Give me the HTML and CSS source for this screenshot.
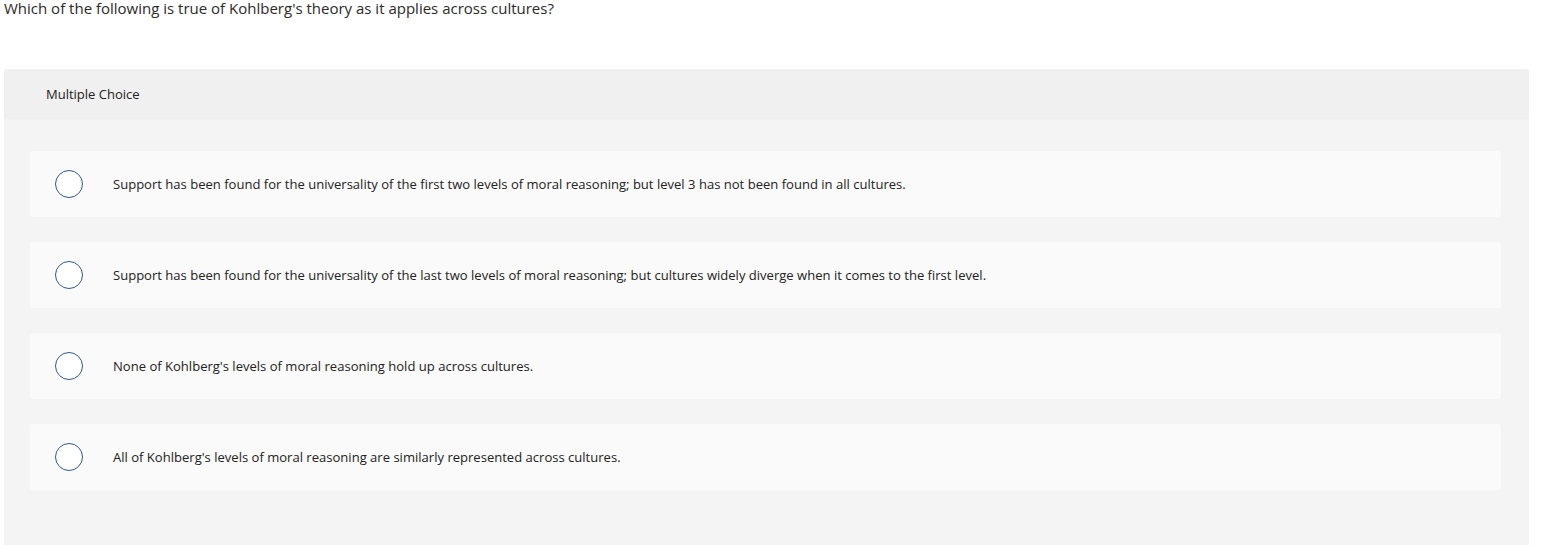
FILE: index.html
```html
<!DOCTYPE html>
<html>
<head>
<meta charset="utf-8">
<link rel="stylesheet" href="styles.css">
</head>
<body>
<p class="question">Which of the following is true of Kohlberg's theory as it applies across cultures?</p>
<section class="panel">
  <header class="panel-head">Multiple Choice</header>
  <div class="options">
    <label class="option"><span class="radio"></span><span class="opt-text">Support has been found for the universality of the first two levels of moral reasoning; but level 3 has not been found in all cultures.</span></label>
    <label class="option"><span class="radio"></span><span class="opt-text">Support has been found for the universality of the last two levels of moral reasoning; but cultures widely diverge when it comes to the first level.</span></label>
    <label class="option"><span class="radio"></span><span class="opt-text">None of Kohlberg's levels of moral reasoning hold up across cultures.</span></label>
    <label class="option"><span class="radio"></span><span class="opt-text">All of Kohlberg's levels of moral reasoning are similarly represented across cultures.</span></label>
  </div>
</section>
</body>
</html>
```
FILE: styles.css
```css
html, body {
  margin: 0;
  padding: 0;
  background: #ffffff;
}
body {
  font-family: "Open Sans", "Liberation Sans", sans-serif;
  color: #333333;
  padding: 0 21px 0 4px;
  overflow: hidden;
  height: 545px;
}
.question {
  margin: 0;
  font-size: 15px;
  line-height: 16px;
  height: 69px;
  color: #2a2a2a;
}
.panel {
  background: #f4f4f4;
  border-radius: 4px;
  height: 500px;
}
.panel-head {
  height: 50px;
  background: #f0f0f0;
  border-radius: 4px 4px 0 0;
  display: flex;
  align-items: center;
  padding-left: 42px;
  font-size: 13px;
  color: #222;
}
.options {
  padding: 32px 28px 0 26px;
  display: flex;
  flex-direction: column;
  gap: 25px;
}
.option {
  display: flex;
  align-items: center;
  height: 66px;
  background: #fafafa;
  border-radius: 3px;
  padding-left: 25px;
}
.radio {
  box-sizing: border-box;
  width: 28px;
  height: 28px;
  border: 1.5px solid #2d5b8a;
  border-radius: 50%;
  background: #fff;
  flex: none;
}
.opt-text {
  margin-left: 30px;
  font-size: 13.05px;
  color: #222;
}
```
